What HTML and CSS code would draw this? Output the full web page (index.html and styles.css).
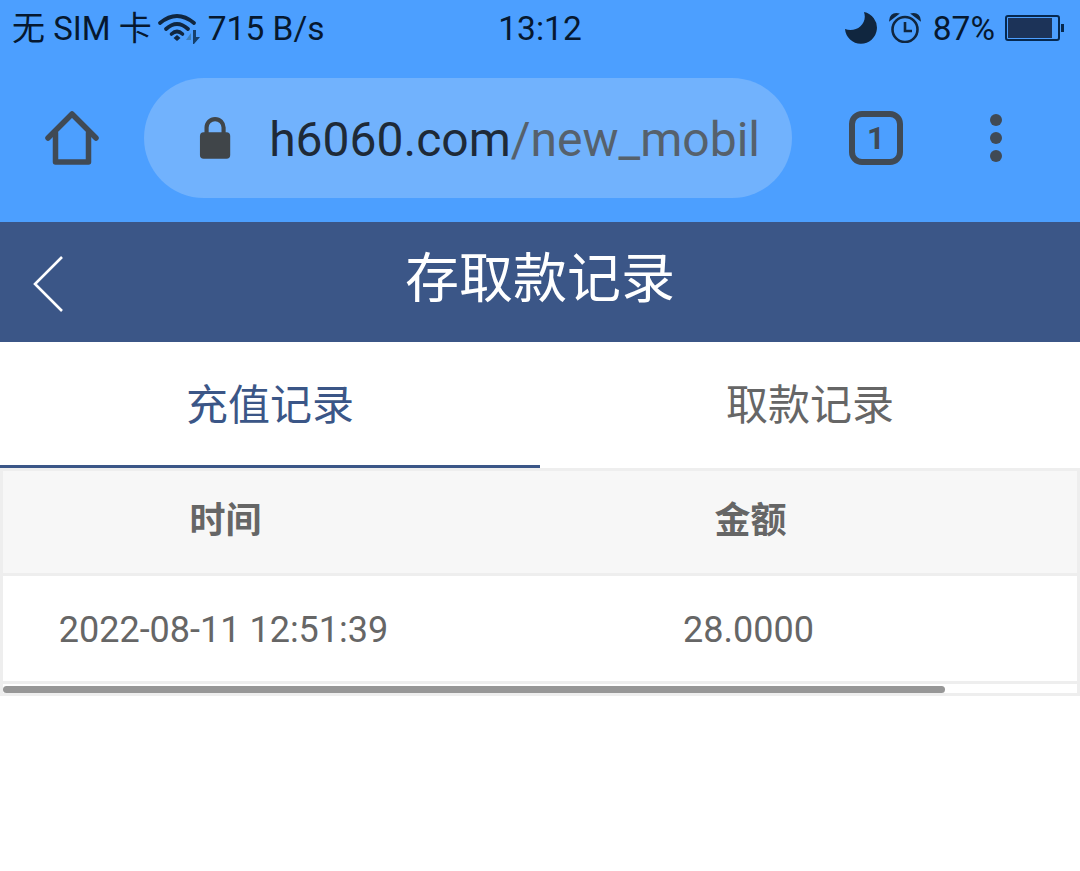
FILE: index.html
```html
<!DOCTYPE html>
<html lang="zh">
<head>
<meta charset="utf-8">
<title>存取款记录</title>
<link rel="stylesheet" href="styles.css">
</head>
<body>
<div class="chrome">
  <div class="status">
    <div class="status-left">
      <span class="carrier">无 SIM 卡</span>
      <svg class="wifi" width="44" height="30" viewBox="0 0 44 30">
        <path d="M2 10 Q19 -4 36 10" fill="none" stroke="#10263f" stroke-width="3.8" stroke-linecap="round"/>
        <path d="M8 16 Q19 6 30 16" fill="none" stroke="#10263f" stroke-width="3.8" stroke-linecap="round"/>
        <path d="M13.5 21 Q19 16 24.5 21" fill="none" stroke="#10263f" stroke-width="3.6" stroke-linecap="round"/>
        <path d="M15.5 25 L19 22 L22.5 25 L19 28 Z" fill="#10263f"/>
        <path d="M28 27 L33 20 V27 Z" fill="#3f7fb8"/>
        <path d="M35 17 H38 V24 H42 L36 31 H35 Z" fill="#16406b"/>
      </svg>
      <span class="speed">715 B/s</span>
    </div>
    <div class="clock">13:12</div>
    <div class="status-right">
      <svg width="32" height="32" viewBox="0 0 32 32"><path d="M19 0 A16 16 0 1 1 0 17 C11 21 23 12 19 0 Z" fill="#10263f"/></svg>
      <svg class="alarm" width="32" height="30" viewBox="0 0 32 30" fill="none" stroke="#10263f"><circle cx="16" cy="16.5" r="12.5" stroke-width="2.6"/><path d="M16 9 V18 H23" stroke-width="2.6"/><path d="M1 7 Q2 0 9 1 Z M31 7 Q30 0 23 1 Z" fill="#10263f" stroke-width="1.5"/></svg>
      <span class="pct">87%</span>
      <div class="battery"><div class="battery-body"><div class="battery-fill"></div></div><div class="battery-cap"></div></div>
    </div>
  </div>
  <div class="toolbar">
    <svg class="home" width="54" height="54" viewBox="0 0 54 54" fill="none" stroke="#404a55" stroke-width="5.5" stroke-linecap="round" stroke-linejoin="round"><path d="M3 27 L27 3 L51 27"/><path d="M10.500 22 V51 H43.500 V22"/></svg>
    <div class="omnibox">
      <svg width="34" height="46" viewBox="0 0 34 46"><path d="M8 18 V12 A9 9 0 0 1 26 12 V18" fill="none" stroke="#404549" stroke-width="4.4"/><rect x="1" y="17" width="32" height="28" rx="4" fill="#404549"/></svg>
      <div class="url"><span class="host">h6060.com</span><span class="path">/new_mobil</span></div>
    </div>
    <div class="tabs-count">1</div>
    <div class="menu"><i></i><i></i><i></i></div>
  </div>
</div>
<header class="page-head">
  <svg class="back" width="32" height="58" viewBox="0 0 32 58" fill="none" stroke="#fff" stroke-width="2.6"><path d="M30 2 L3 29 L30 56"/></svg>
  <h1>存取款记录</h1>
</header>
<nav class="tabs">
  <div class="tab active">充值记录</div>
  <div class="tab">取款记录</div>
</nav>
<section class="records">
  <div class="row head"><div>时间</div><div>金额</div></div>
  <div class="row data"><div>2022-08-11 12:51:39</div><div>28.0000</div></div>
  <div class="track"><div class="thumb"></div></div>
</section>
</body>
</html>
```

FILE: styles.css
```css
* { box-sizing: border-box; }
html, body { margin: 0; padding: 0; }
body {
  width: 1080px;
  height: 871px;
  overflow: hidden;
  background: #fff;
  font-family: Roboto, "Noto Sans CJK SC", sans-serif;
}
.chrome { background: #4c9fff; height: 222px; }
.status {
  height: 56px;
  display: grid;
  grid-template-columns: 1fr auto 1fr;
  align-items: center;
  padding: 0 16px 0 12px;
  color: #06182f;
  font-size: 33.500px;
}
.status-left { display: flex; align-items: center; white-space: nowrap; }
.carrier { font-size: 33px; margin-top: -4px; }
.wifi { margin: 0 0 0 6px; overflow: visible; }
.speed { margin-left: 6px; }
.clock { font-size: 33.500px; margin-left: 4px; }
.status-right { display: flex; align-items: center; justify-content: flex-end; gap: 12px; }
.pct { margin-right: -2px; }
.battery { display: flex; align-items: center; }
.battery-body {
  width: 55px;
  height: 26px;
  border: 2px solid #06284f;
  border-radius: 3px;
  padding: 1px;
}
.battery-fill { width: 44px; height: 100%; background: #1c3358; }
.battery-cap { width: 3px; height: 8px; background: #06284f; margin-left: 1px; }
.toolbar {
  height: 166px;
  display: flex;
  align-items: center;
  padding: 0 0 2px 45px;
}
.omnibox {
  width: 648px;
  height: 120px;
  margin-left: 45px;
  padding: 0 32px 0 55px;
  border-radius: 60px;
  background: #71b2fd;
  display: flex;
  align-items: center;
  gap: 38px;
}
.url {
  flex: 1;
  white-space: nowrap;
  font-size: 48px;
  line-height: 60px;
  position: relative;
  top: 2px;
}
.host { color: #1e2a38; }
.path { color: #56616c; }
.tabs-count {
  width: 54px;
  height: 54px;
  margin-left: 57px;
  border: 6px solid #404a55;
  border-radius: 13px;
  color: #404a55;
  font-size: 31px;
  font-weight: 700;
  display: flex;
  align-items: center;
  justify-content: center;
}
.menu {
  margin-left: 87px;
  display: flex;
  flex-direction: column;
  gap: 6px;
}
.menu i { display: block; width: 12px; height: 12px; border-radius: 50%; background: #404a55; }
.page-head {
  height: 120px;
  background: #3b5687;
  color: #fff;
  position: relative;
  display: flex;
  align-items: center;
  justify-content: center;
}
.page-head h1 { margin: 0; font-size: 54px; font-weight: 400; line-height: 1; position: relative; top: -2px; }
.back { position: absolute; left: 32px; top: 33px; }
.tabs { display: flex; height: 126px; }
.tab {
  flex: 1;
  display: flex;
  align-items: center;
  justify-content: center;
  font-size: 42px;
  color: #666;
  padding-bottom: 4px;
  border-bottom: 3px solid transparent;
}
.tab.active { color: #3b5687; border-bottom-color: #3b5687; }
.records {
  border: 3px solid #eee;
  color: #666;
}
.row {
  display: grid;
  grid-template-columns: 445px 1fr;
  height: 105px;
  align-items: center;
  text-align: center;
  font-size: 36px;
  border-bottom: 3px solid #eee;
}
.row > div:last-child { padding-right: 24px; }
.row.head {
  background: #f7f7f7;
  font-weight: 700;
  font-size: 36px;
  padding-bottom: 10px;
}
.row.data { height: 108px; padding-top: 2px; }
.row.data > div:first-child { padding-right: 4px; }
.row.data > div:last-child { padding-right: 28px; }
.track { height: 9px; background: #fff; padding-top: 2px; }
.thumb { width: 942px; height: 7px; background: #979797; border-radius: 4px; }
```
